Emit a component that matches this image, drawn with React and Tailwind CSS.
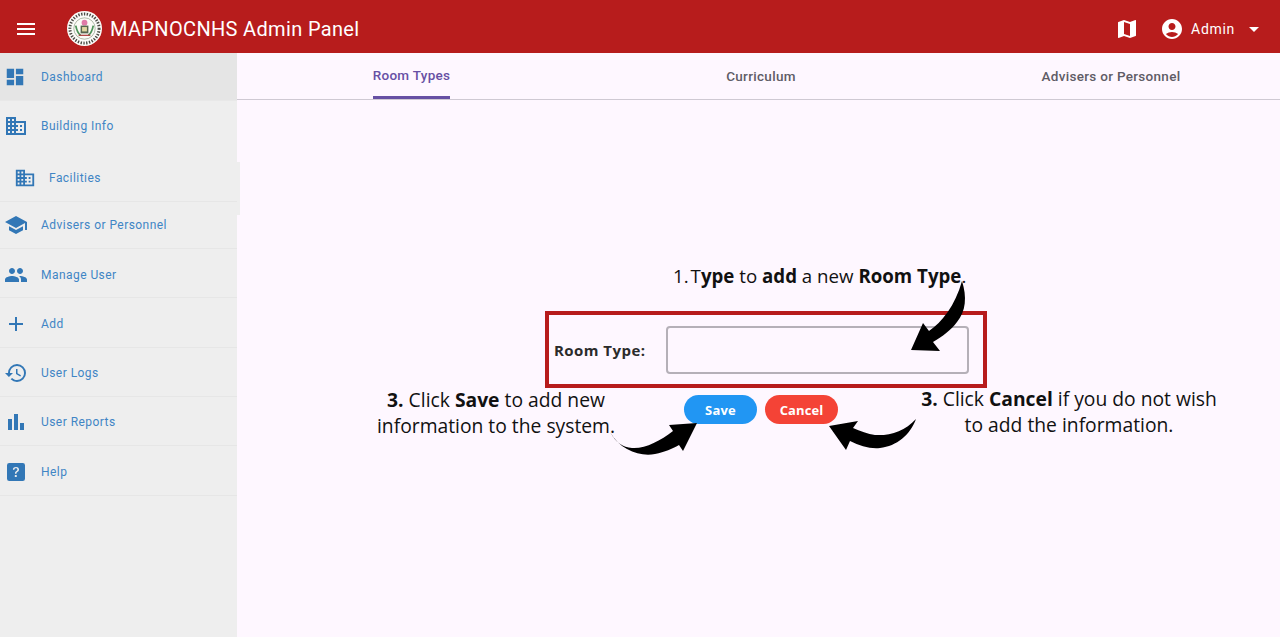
import React from "react";
import { MdMenu, MdMap, MdAccountCircle, MdArrowDropDown, MdDashboard, MdDomain, MdSchool, MdPeople, MdAdd, MdHistory, MdBarChart } from "react-icons/md";
import { BsQuestionSquareFill } from "react-icons/bs";

const items = [
  { label: "Dashboard", Icon: MdDashboard, cls: "h-[47px] bg-[#e5e5e5]", size: 22 },
  { label: "Building Info", Icon: MdDomain, cls: "h-[50px] pt-[1px] border-t border-[#e8e8e8]", size: 24 },
  { label: "Facilities", Icon: MdDomain, cls: "h-[52px] pl-[3px] pt-[4px] bg-[#eeeeee] border-b border-[#e6e6e6]", size: 22, sub: true },
  { label: "Advisers or Personnel", Icon: MdSchool, cls: "h-[47px] border-b border-[#e6e6e6]", size: 24 },
  { label: "Manage User", Icon: MdPeople, cls: "h-[49px] pt-[3px] border-b border-[#e6e6e6]", size: 24 },
  { label: "Add", Icon: MdAdd, cls: "h-[50px] pt-[2px] border-b border-[#e6e6e6]", size: 24 },
  { label: "User Logs", Icon: MdHistory, cls: "h-[49px] pt-[2px] border-b border-[#e6e6e6]", size: 24 },
  { label: "User Reports", Icon: MdBarChart, cls: "h-[49px] pt-[2px] border-b border-[#e6e6e6]", size: 24 },
  { label: "Help", Icon: BsQuestionSquareFill, cls: "h-[50px] pt-[2px] border-b border-[#e6e6e6]", size: 18 },
];

function Logo() {
  return (
    <svg width="35" height="35" viewBox="0 0 36 36" className="shrink-0">
      <circle cx="18" cy="18" r="18" fill="#fbfbf8" />
      <circle cx="18" cy="18" r="15" fill="none" stroke="#4a4a44" strokeWidth="3" strokeDasharray="1.4 1.5" />
      <circle cx="18" cy="18" r="11" fill="#fbfbf6" stroke="#7a8a70" strokeWidth="0.6" />
      <path d="M9 15c1 5 2 8 5 10M27 15c-1 5-2 8-5 10" fill="none" stroke="#4d9459" strokeWidth="1.8" />
      <circle cx="18" cy="12" r="3" fill="#e07aa8" />
      <rect x="14" y="15" width="8" height="8" fill="#56664e" />
      <rect x="15.5" y="16.5" width="5" height="4.5" fill="#e0d6a0" />
      <path d="M12 25h12" stroke="#a33" strokeWidth="1.2" />
    </svg>
  );
}

function CurvedArrowDown() {
  return (
    <svg width="65" height="76" viewBox="905 278 65 76" className="absolute left-[668px] top-[225px]">
      <path d="M962 281C967 297 966 311 957 322C951 330 943 336 933 342L940 351L911 350L923 323L929 331C942 322 955 306 962 281Z" fill="#000" />
    </svg>
  );
}

function ArrowSave() {
  return (
    <svg width="92" height="36" viewBox="608 421 92 36" className="absolute left-[371px] top-[368px]">
      <path d="M610 432C620 450 640 457 655 454C665 452 672 449 679 445L683 451L697 423L669 425L673 431C660 441 645 449 632 448C623 447 616 443 610 432Z" fill="#000" />
    </svg>
  );
}

function ArrowCancel() {
  return (
    <svg width="92" height="34" viewBox="827 418 92 34" className="absolute left-[590px] top-[365px]">
      <path d="M916 419C905 431 890 436 875 435C868 434 860 431 853 428L858 421L829 426L846 450L850 441C860 446 870 449 880 448C897 446 910 435 916 419Z" fill="#000" />
    </svg>
  );
}

export default function App() {
  return (
    <div className="h-[642px] w-[1280px] overflow-hidden bg-white font-['Roboto',sans-serif]">
      <div className="h-[637px] flex flex-col bg-[#fef7ff]">
        <header className="h-[53px] shrink-0 bg-[#b71c1c] flex items-center pt-[4px] text-white">
          <MdMenu size={24} className="ml-[14px]" />
          <div className="ml-[29px] flex"><Logo /></div>
          <div className="ml-[8px] text-[20px] leading-none tracking-[0.34px]">MAPNOCNHS Admin Panel</div>
          <div className="ml-auto flex items-center">
            <MdMap size={24} />
            <MdAccountCircle size={24} className="ml-[21px]" />
            <span className="ml-[7px] mt-[2px] text-[14px] tracking-[0.7px]">Admin</span>
            <MdArrowDropDown size={24} className="ml-[7px] mr-[14px]" />
          </div>
        </header>
        <div className="flex flex-1 min-h-0">
          <aside className="relative w-[237px] shrink-0 bg-[#eeeeee]">
            {items.map(({ label, Icon, cls, size, sub }) => (
              <div key={label} className={`flex items-center text-[#3f85c5] ${cls}`}>
                <div className={`${sub ? "ml-[5px] pl-[6px]" : "pl-[4px]"} w-[41px] shrink-0 flex justify-start`}>
                  <Icon size={size} className={size === 18 ? "ml-[3px] text-[#3277b6]" : "text-[#3277b6]"} />
                </div>
                <span className="text-[12px] tracking-[0.45px] leading-none">{label}</span>
              </div>
            ))}
            <div className="absolute left-[237px] top-[109px] w-[3px] h-[53px] bg-[#eeeeee]" />
          </aside>
          <main className="relative flex-1 min-w-0 overflow-hidden">
            <div className="h-[47px] border-b border-[#cfc9d3] flex text-[13.5px] font-medium tracking-[0.3px] text-[#5f5c66]">
              <div className="w-[349px] shrink-0 flex justify-center">
                <div className="h-[46px] pt-[1px] flex items-center border-b-[3px] border-[#6750a4] text-[#6750a4]">Room Types</div>
              </div>
              <div className="w-[350px] shrink-0 flex items-center justify-center">Curriculum</div>
              <div className="w-[350px] shrink-0 flex items-center justify-center">Advisers or Personnel</div>
            </div>
            <div className="ml-[308px] mt-[211px] w-[442px] h-[77px] border-[4px] border-[#b71c1c] flex items-center pl-[5px]">
              <label className="mt-[2px] text-[15px] font-bold tracking-[0.45px] text-[#2b2b2b] w-[112px] font-['Open_Sans',sans-serif]">Room Type:</label>
              <div className="mt-[1px] w-[303px] h-[48px] rounded-[4px] border-[2px] border-[#b5b0b8]" />
            </div>
            <div className="ml-[447px] mt-[7px] flex gap-[8px]">
              <button className="w-[73px] h-[29px] pt-[2px] rounded-full bg-[#2196f3] text-white text-[13px] font-bold tracking-[0.2px] font-['Open_Sans',sans-serif]">Save</button>
              <button className="w-[73px] h-[29px] pt-[2px] rounded-full bg-[#f44336] text-white text-[13px] font-bold tracking-[0.1px] font-['Open_Sans',sans-serif]">Cancel</button>
            </div>

            <div className="absolute left-[436px] top-[211px] text-[18.7px] leading-[24px] text-[#111] whitespace-nowrap font-['Open_Sans',sans-serif]">
              1.<span className="ml-[2px]">T</span><b>ype</b> to <b>add</b> a new <b>Room Type</b>.
            </div>
            <div className="absolute left-[130px] top-[334px] w-[258px] text-center text-[19.3px] leading-[26px] text-[#111] font-['Open_Sans',sans-serif]">
              <b>3.</b> Click <b>Save</b> to add new<br />information to the system.
            </div>
            <div className="absolute left-[672px] top-[333px] w-[320px] text-center text-[19.3px] leading-[26px] text-[#111] font-['Open_Sans',sans-serif]">
              <b>3.</b> Click <b>Cancel</b> if you do not wish<br />to add the information.
            </div>
            <CurvedArrowDown />
            <ArrowSave />
            <ArrowCancel />
          </main>
        </div>
      </div>
    </div>
  );
}
